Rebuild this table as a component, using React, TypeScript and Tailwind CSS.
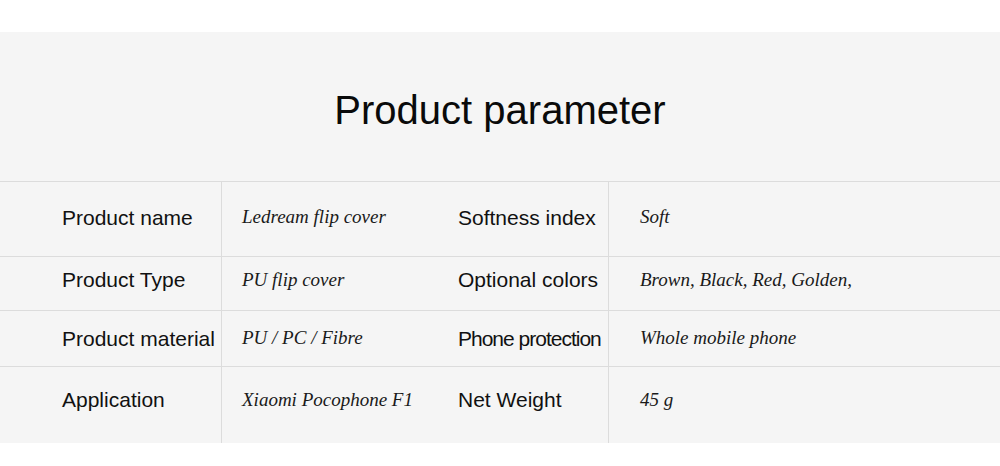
const rows = [
  { a: 'Product name', b: 'Ledream flip cover', c: 'Softness index', d: 'Soft', h: 'h-[75px]', pb: 'pb-[3px]' },
  { a: 'Product Type', b: 'PU flip cover', c: 'Optional colors', d: 'Brown, Black, Red, Golden,', h: 'h-[54px]', pb: 'pb-[7px]' },
  { a: 'Product material', b: 'PU / PC / Fibre', c: 'Phone protection', d: 'Whole mobile phone', h: 'h-[56px]', pb: 'pb-0' },
  { a: 'Application', b: 'Xiaomi Pocophone F1', c: 'Net Weight', d: '45 g', h: 'h-[76px]', pb: 'pb-[10px]', last: true },
]

export default function App() {
  return (
    <div className="w-[1000px] h-[466px] bg-white pt-[32px] font-['Liberation_Sans',Arial,sans-serif]">
      <div className="h-[411px] bg-[#f5f5f5]">
        <h1 className="pt-[58px] text-center text-[40px] leading-[40px] text-[#0a0a0a]">Product parameter</h1>

        <div className="mt-[51px] border-t border-[#dcdcdc]">
          {rows.map((r) => (
            <div
              key={r.a}
              className={`grid grid-cols-[222px_236px_151px_1fr] ${r.h} ${r.last ? '' : 'border-b border-[#dcdcdc]'}`}
            >
              <div className={`flex items-center pl-[62px] border-r border-[#dcdcdc] text-[21px] text-[#111] ${r.pb}`}>
                {r.a}
              </div>
              <div className={`flex items-center pl-[20px] font-['Liberation_Serif',serif] italic text-[19px] text-[#1a1a1a] ${r.pb}`}>
                {r.b}
              </div>
              <div
                className={`flex items-center border-r border-[#dcdcdc] text-[21px] text-[#111] whitespace-nowrap ${r.pb} ${
                  r.c === 'Phone protection' ? 'tracking-[-1px]' : ''
                }`}
              >
                {r.c}
              </div>
              <div className={`flex items-center pl-[31px] font-['Liberation_Serif',serif] italic text-[19px] text-[#1a1a1a] ${r.pb}`}>
                {r.d}
              </div>
            </div>
          ))}
        </div>
      </div>
    </div>
  )
}
